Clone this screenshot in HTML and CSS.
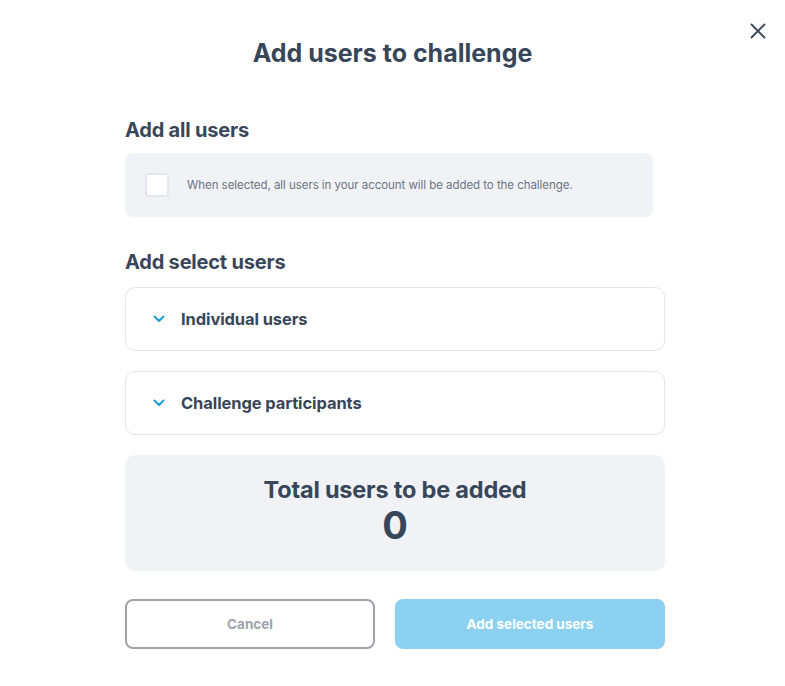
FILE: index.html
```html
<!DOCTYPE html>
<html lang="en">
<head>
<meta charset="utf-8">
<title>Add users to challenge</title>
<link rel="stylesheet" href="styles.css">
</head>
<body>
<div class="modal">
  <button class="close" aria-label="Close">
    <svg width="16" height="16" viewBox="0 0 16 16"><path d="M1.5 1.5 L14.5 14.5 M14.5 1.5 L1.5 14.5" stroke="#3a4656" stroke-width="1.8" stroke-linecap="round" fill="none"/></svg>
  </button>
  <h1 class="title">Add users to challenge</h1>

  <section class="content">
    <h2 class="section-heading">Add all users</h2>
    <label class="all-box">
      <span class="checkbox"></span>
      <span class="all-text">When selected, all users in your account will be added to the challenge.</span>
    </label>

    <h2 class="section-heading second">Add select users</h2>
    <div class="accordions">
      <div class="accordion">
        <svg class="chevron" width="12" height="8" viewBox="0 0 12 8"><path d="M1.5 1.5 L6 6 L10.5 1.5" stroke="#1a9fdc" stroke-width="2" fill="none" stroke-linecap="round" stroke-linejoin="round"/></svg>
        <span class="accordion-label">Individual users</span>
      </div>
      <div class="accordion">
        <svg class="chevron" width="12" height="8" viewBox="0 0 12 8"><path d="M1.5 1.5 L6 6 L10.5 1.5" stroke="#1a9fdc" stroke-width="2" fill="none" stroke-linecap="round" stroke-linejoin="round"/></svg>
        <span class="accordion-label">Challenge participants</span>
      </div>
      <div class="total">
        <div class="total-label">Total users to be added</div>
        <div class="total-count">0</div>
      </div>
    </div>

    <div class="actions">
      <button class="btn btn-cancel">Cancel</button>
      <button class="btn btn-primary">Add selected users</button>
    </div>
  </section>
</div>
</body>
</html>
```

FILE: styles.css
```css
* { box-sizing: border-box; }

html, body {
  margin: 0;
  padding: 0;
  background: #ffffff;
}

body {
  font-family: "Inter", "Lato", "Liberation Sans", sans-serif;
  color: #38465a;
}

.modal {
  position: relative;
  width: 785px;
  height: 686px;
  padding-top: 38px;
}

.close {
  position: absolute;
  top: 23px;
  left: 750px;
  width: 16px;
  height: 16px;
  padding: 0;
  border: 0;
  background: none;
  display: flex;
}

.title {
  margin: 0;
  text-align: center;
  font-size: 25px;
  line-height: 30px;
  font-weight: 700;
  letter-spacing: 0;
  color: #38465a;
}

.content {
  width: 540px;
  margin: 0 0 0 125px;
  padding-top: 50px;
  display: flex;
  flex-direction: column;
}

.section-heading {
  margin: 0;
  font-size: 20px;
  line-height: 24px;
  font-weight: 700;
  letter-spacing: -0.2px;
  color: #38465a;
}

.section-heading.second {
  margin-top: 33px;
}

.all-box {
  margin-top: 11px;
  width: 528px;
  height: 64px;
  background: #f0f2f6;
  border-radius: 8px;
  display: flex;
  align-items: center;
  padding-left: 20px;
}

.checkbox {
  width: 24px;
  height: 24px;
  background: #ffffff;
  border: 2px solid #e2e6ed;
  border-radius: 3px;
  flex: none;
}

.all-text {
  margin-left: 18px;
  font-size: 11.5px;
  color: #6c7583;
  letter-spacing: -0.05px;
}

.accordions {
  margin-top: 13px;
  display: flex;
  flex-direction: column;
  gap: 20px;
}

.accordion {
  height: 64px;
  border: 1px solid #e1e5eb;
  border-radius: 10px;
  display: flex;
  align-items: center;
  padding-left: 27px;
}

.chevron {
  flex: none;
  margin-top: -1px;
}

.accordion-label {
  margin-left: 16px;
  font-size: 16.5px;
  font-weight: 700;
  color: #38465a;
  letter-spacing: -0.1px;
}

.total {
  height: 116px;
  background: #f0f2f6;
  border-radius: 10px;
  display: flex;
  flex-direction: column;
  align-items: center;
  padding-top: 21px;
}

.total-label {
  font-size: 23.5px;
  line-height: 28px;
  font-weight: 700;
  letter-spacing: -0.2px;
  color: #38465a;
}

.total-count {
  font-size: 38px;
  line-height: 42px;
  font-weight: 700;
  color: #38465a;
}

.actions {
  margin-top: 28px;
  display: flex;
  gap: 20px;
}

.btn {
  height: 50px;
  border-radius: 8px;
  font-family: inherit;
  font-size: 13.5px;
  font-weight: 700;
  cursor: pointer;
}

.btn-cancel {
  width: 250px;
  background: #ffffff;
  border: 2px solid #9ea3ac;
  color: #9ea3ac;
}

.btn-primary {
  width: 270px;
  background: #8dd1f0;
  border: 0;
  color: #ffffff;
}
```
